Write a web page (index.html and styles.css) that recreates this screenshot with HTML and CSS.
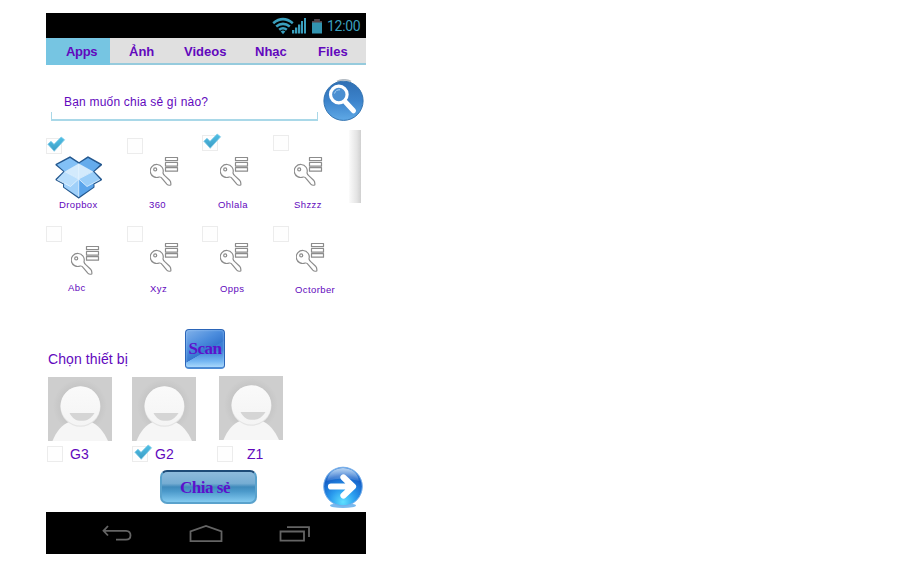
FILE: index.html
```html
<!DOCTYPE html>
<html lang="vi">
<head>
<meta charset="utf-8">
<title>Chia sẻ</title>
<link rel="stylesheet" href="styles.css">
</head>
<body>
<svg class="defs" width="0" height="0" aria-hidden="true">
  <defs>
    <linearGradient id="tick" x1="0" y1="0" x2="0" y2="1"><stop offset="0" stop-color="#4fc0e6"/><stop offset="1" stop-color="#3d9cc4"/></linearGradient>
    <linearGradient id="blue" x1="0" y1="0" x2="0" y2="1"><stop offset="0" stop-color="#2f6fb4"/><stop offset=".5" stop-color="#3c83cb"/><stop offset="1" stop-color="#5fa9e6"/></linearGradient>
    <radialGradient id="orb" cx=".5" cy=".9" r=".85"><stop offset="0" stop-color="#5fe0ff"/><stop offset=".4" stop-color="#2a9bee"/><stop offset=".8" stop-color="#1560c8"/><stop offset="1" stop-color="#4a8fdc"/></radialGradient>
    <linearGradient id="gloss" x1="0" y1="0" x2="0" y2="1"><stop offset="0" stop-color="#fff" stop-opacity=".6"/><stop offset="1" stop-color="#fff" stop-opacity=".1"/></linearGradient>
    <linearGradient id="head" x1="0" y1="0" x2="0" y2="1"><stop offset="0" stop-color="#fafafa"/><stop offset="1" stop-color="#f4f4f4"/></linearGradient>
    <radialGradient id="back"><stop offset=".6" stop-color="#c2c2c2"/><stop offset="1" stop-color="#cecece"/></radialGradient>
  </defs>
  <symbol id="check" viewBox="0 0 20 18"><path d="M1.800 9.200 L5 6.200 L8 9.300 L15.200 2 L18.600 4.800 L8.200 16.300 Z" fill="url(#tick)" stroke="#7fcbe9" stroke-width=".8" stroke-linejoin="round"/></symbol>
  <symbol id="key" viewBox="0 0 29 31">
    <g fill="none" stroke="#8c8c8c" stroke-width="1.200" stroke-linejoin="round">
      <path d="M9.200 21 A6.500 6.500 0 1 1 13 16.800 C13.200 18.300 14 19 15 19.900 L19.600 24.200 Q21.200 26 20.800 29 Q18.400 29.800 16.800 28.200 L12.200 22.600 Q11.200 20.800 9.200 21 Z"/>
      <circle cx="5.200" cy="13.400" r="1.500"/>
      <path d="M15.500 1.500H27.500V4.700H15.500Z M15.500 6.500H27.500V10.200H15.500Z M15.500 11.600H27.500V15.200H15.500Z"/>
    </g>
  </symbol>
  <symbol id="person" viewBox="0 0 64 64">
    <rect width="64" height="64" fill="#cecece"/>
    <circle cx="32" cy="29" r="27" fill="url(#back)"/>
    <path d="M4.500 64 C8 55 14 47.500 21 45 H43 C50 47.500 56 55 60 64 Z" fill="#f6f6f6"/>
    <circle cx="32.400" cy="29.600" r="20.100" fill="#e4e4e4"/>
    <circle cx="32.400" cy="28.900" r="19.700" fill="url(#head)"/>
    <path d="M21.500 35.900 H46.500 C43 41.500 39 43.800 33.500 43.800 C28 43.800 24.500 41.500 21.500 35.900 Z" fill="#d5d5d5"/>
  </symbol>
</svg>

<main class="phone">
  <header class="status">
    <svg class="status-icons" width="51" height="18" viewBox="0 0 51 18">
      <g fill="none" stroke="#3a9fbd" stroke-width="2.600"><path d="M1.200 6.200 Q11 -2 20.800 6.200"/><path d="M4.200 9.600 Q11 4 17.800 9.600"/><path d="M7.200 12.800 Q11 9.700 14.800 12.800"/></g>
      <path d="M8.700 14.500 Q11 12.700 13.300 14.500 L11 17.200Z" fill="#3a9fbd"/>
      <path d="M20 13h2.300v3.500H20zM23 10.500h2.300v6H23zM26 7.500h2.300v9H26zM29 4h2v12.500h-2zM32 1h2v15.500h-2z" fill="#3a9fbd"/>
      <path d="M40 4h2.500V2h5v2H50v12.500H40z" fill="#3293af"/><path d="M40 4h2.500V2h5v2H50v1.500H40z" fill="#554348"/>
    </svg>
    <span class="clock">12:00</span>
  </header>

  <nav class="tabs">
    <a class="tab tab-active">Apps</a><a class="tab tab-photo">Ảnh</a><a class="tab tab-video">Videos</a><a class="tab tab-music">Nhạc</a><a class="tab">Files</a>
  </nav>

  <section class="search">
    <div class="field">Bạn muốn chia sẻ gì nào?</div>
    <svg width="42" height="44" viewBox="0 0 42 44">
      <path d="M14 2.500 Q21 -1 28 2.500" fill="none" stroke="#b5bdc5" stroke-width="1.600"/>
      <circle cx="20.500" cy="21.800" r="19.600" fill="url(#blue)" stroke="#3474b1"/>
      <path d="M21 21.500 L30.500 31.800" stroke="#fff" stroke-width="5" stroke-linecap="round"/>
      <circle cx="15.800" cy="15.500" r="8.300" fill="#4b8fd1" stroke="#fff" stroke-width="3.200"/>
      <path d="M11.500 14.500 Q12.800 10.500 17 10.800" stroke="#a7d0f3" fill="none"/>
    </svg>
  </section>

  <section class="apps">
    <div class="grid">
      <div class="app dropbox">
        <span class="box"><svg class="mark" width="20" height="18"><use href="#check"/></svg></span>
        <svg class="icon" width="47" height="43" viewBox="0 0 47 43">
          <g stroke-linejoin="round">
            <path d="M15 1.300 L24 7.300 L33 1.300 L46 8.700 L38 15.500 L46 23.500 L38.500 27.500 V31 L23.700 41.500 L9 31 V27.500 L1.500 23.500 L9.700 15.500 L1.500 8.700 Z" fill="#7dbdf5" stroke="#24588f" stroke-width="2"/>
            <path d="M15 2 L23.500 7.500 L9.700 15.500 L2 8.700Z" fill="#82c0f6"/>
            <path d="M33 2 L24 7.500 L38 15.500 L45 8.700Z" fill="#64abec"/>
            <path d="M9.700 15.500 L23.700 7.500 L38 15.500 L23.700 23Z" fill="#d3eafc"/>
            <path d="M9.700 15.500 L23.700 23 V41 L9 31Z" fill="#9fd0fa"/>
            <path d="M38 15.500 L23.700 23 V41 L38.500 31Z" fill="#5ba5eb"/>
            <path d="M9.700 15.500 L23.700 23 L15.500 30.500 L2 23.500Z" fill="#b9defc"/>
            <path d="M38 15.500 L23.700 23 L32 30.500 L45.300 23.500Z" fill="#9aceF9"/>
            <path d="M2 23.500 L15.500 30.500 L23.700 23 L32 30.500 L45 23.500 M23.700 7.500V41 M9.700 15.500 L23.700 23 L38 15.500" fill="none" stroke="#e5f3fe" stroke-width=".8"/>
          </g>
        </svg>
        <span class="name">Dropbox</span>
      </div>
      <div class="app a360"><span class="box"></span><svg class="icon" width="29" height="31"><use href="#key"/></svg><span class="name">360</span></div>
      <div class="app ohlala"><span class="box"><svg class="mark" width="20" height="18"><use href="#check"/></svg></span><svg class="icon" width="29" height="31"><use href="#key"/></svg><span class="name">Ohlala</span></div>
      <div class="app shzzz"><span class="box"></span><svg class="icon" width="29" height="31"><use href="#key"/></svg><span class="name">Shzzz</span></div>
      <div class="app abc"><span class="box"></span><svg class="icon" width="29" height="31"><use href="#key"/></svg><span class="name">Abc</span></div>
      <div class="app xyz"><span class="box"></span><svg class="icon" width="29" height="31"><use href="#key"/></svg><span class="name">Xyz</span></div>
      <div class="app opps"><span class="box"></span><svg class="icon" width="29" height="31"><use href="#key"/></svg><span class="name">Opps</span></div>
      <div class="app octorber"><span class="box"></span><svg class="icon" width="29" height="31"><use href="#key"/></svg><span class="name">Octorber</span></div>
    </div>
    <div class="scrollbar"></div>
  </section>

  <section class="choose">
    <h2>Chọn thiết bị</h2>
    <button class="scan">Scan</button>
  </section>

  <section class="devices">
    <div class="device g3"><svg width="64" height="64"><use href="#person"/></svg><label><span class="box"></span><span>G3</span></label></div>
    <div class="device g2"><svg width="64" height="64"><use href="#person"/></svg><label><span class="box"><svg class="mark" width="20" height="18"><use href="#check"/></svg></span><span>G2</span></label></div>
    <div class="device z1"><svg width="64" height="64"><use href="#person"/></svg><label><span class="box"></span><span>Z1</span></label></div>
  </section>

  <section class="actions">
    <button class="share">Chia sẻ</button>
    <svg class="next" width="40" height="44" viewBox="0 0 40 44">
      <ellipse cx="20" cy="39.500" rx="13" ry="2.500" fill="#79b9ee"/>
      <circle cx="20" cy="20.500" r="19.300" fill="url(#orb)" stroke="#76aeea"/>
      <path d="M4 15 Q6 3 20 2 Q34 3 36 15 Q20 10 4 15Z" fill="url(#gloss)"/>
      <path d="M8 20.500 H29 M20.500 11.500 L30 20.500 L20.500 29.500" fill="none" stroke="#fff" stroke-width="6.200" stroke-linecap="round" stroke-linejoin="round"/>
    </svg>
  </section>

  <footer class="navbar">
    <svg width="30" height="18" viewBox="0 0 30 18"><path d="M6 1 L1.500 5.800 L6 10.500 M1.500 5.800 H24 Q28.500 6 28.500 10.300 Q28.500 14.700 24 14.700 H14" /></svg>
    <svg width="34" height="18" viewBox="0 0 34 18"><path d="M1.500 16.200 V6.500 L17 1 L32.500 6.500 V16.200Z"/></svg>
    <svg width="32" height="18" viewBox="0 0 32 18"><path d="M1.500 6.500 H25 V15.700 H1.500Z M8 2.200 H30 V12"/></svg>
  </footer>
</main>
</body>
</html>
```
FILE: styles.css
```css
* { box-sizing: border-box; }
body {
  margin: 0;
  padding: 13px 0 0 46px;
  background: #fff;
  color: #6208bd;
  font-family: "Liberation Sans", Arial, sans-serif;
}
svg { display: block; flex: none; }
button { padding: 0; font: bold 17px "Liberation Serif", serif; color: #5c12cc; }
.defs { position: absolute; }
.phone { width: 320px; height: 541px; display: flex; flex-direction: column; }
.phone > * { flex: none; }

.status {
  height: 25px;
  background: #000;
  display: flex;
  align-items: center;
  justify-content: flex-end;
  padding: 1px 6px 0 0;
  gap: 4px;
}
.clock { color: #3a9fbd; font: 14px/20px Roboto, sans-serif; width: 33px; letter-spacing: -0.3px; }

.tabs { height: 27px; display: flex; background: #e0e0e0; border-bottom: 2px solid #96cbdd; }
.tab { flex: none; padding-left: 19px; font-size: 13px; font-weight: bold; line-height: 27px; }
.tab-active { width: 64px; height: 27px; padding-left: 20px; background: #76c5e2; letter-spacing: -.3px; }
.tab-photo { width: 55px; }
.tab-video { width: 71px; }
.tab-music { width: 63px; }

.search { height: 65px; display: flex; padding: 14px 1px 0 5px; gap: 5px; }
.field {
  width: 267px;
  height: 42px;
  padding: 15px 0 0 12px;
  font-size: 12px;
  line-height: 16px;
  letter-spacing: .2px;
  border: solid;
  border-width: 0 1px 2px;
  border-image: linear-gradient(to top, #a9d8e8 8px, transparent 8px) 1;
}

.apps { height: 187px; display: flex; }
.grid { width: 303px; display: grid; grid-template-columns: 81px 75px 71px 76px; grid-template-rows: 88px 99px; }
.app { display: flex; flex-direction: column; align-items: flex-start; padding-top: 8px; }
.box { position: relative; display: block; flex: none; width: 16px; height: 16px; border: 1px solid #ececec; background: #fefefe; }
.mark { position: absolute; left: 0; top: -4px; }
.icon { margin: 2px 0 0 23px; }
.name {
  font-size: 9.5px;
  line-height: 12px;
  letter-spacing: .4px;
  margin: 12px 0 0 22px;
  white-space: nowrap;
}
.dropbox .icon { margin: 2px 0 0 9px; }
.dropbox .name { margin: 0 0 0 13px; }
.ohlala, .shzzz { padding-top: 5px; }
.ohlala .icon { margin: 5px 0 0 18px; }
.ohlala .name { margin-left: 16px; }
.shzzz .icon { margin: 5px 0 0 21px; }
.shzzz .name { margin-left: 21px; }
.abc .icon { margin: 3px 0 0 25px; }
.abc .name { margin: 6px 0 0 22px; }
.xyz .icon, .opps .icon, .octorber .icon { margin-top: 0; }
.xyz .name { margin: 10px 0 0 23px; }
.opps .icon { margin-left: 18px; }
.opps .name { margin: 10px 0 0 18px; }
.octorber .icon { margin-left: 23px; }
.octorber .name { margin: 11px 0 0 22px; }
.dropbox .mark, .ohlala .mark { left: -1px; }
.scrollbar { width: 12px; height: 73px; background: linear-gradient(to right, #fbfbfb, #e4e4e4 65%, #d0d0d0); }

.choose { height: 59px; display: flex; padding: 12px 0 0 2px; }
h2 { margin: 21px 0 0; width: 137px; font-size: 14px; line-height: 18px; font-weight: normal; letter-spacing: .1px; }
.scan {
  width: 40px;
  height: 40px;
  border: 1px solid #2b65b8;
  border-bottom: 2px solid #4c8bd4;
  border-radius: 4px;
  letter-spacing: -.5px;
  background: linear-gradient(150deg, #82b2ea 0%, #4c8ddd 35%, #3577cf 55%, transparent 56%), linear-gradient(#3b7fd5 55%, #77b8f3 85%, #a7d8fb);
  box-shadow: inset 0 0 2px #a8d2fa;
}

.devices { height: 92px; display: flex; }
.device { width: 84px; padding: 1px 0 0 2px; }
.device label { display: flex; align-items: center; height: 18px; margin: 4px 0 0 -1px; gap: 7px; font-size: 14px; }
.g2 { width: 87px; }
.g2 label { margin-left: 0; gap: 7px; }
.z1 { padding-top: 0; }
.z1 label { margin: 5px 0 0 -2px; gap: 14px; }

.actions { height: 44px; display: flex; padding-left: 114px; align-items: flex-start; }
.share {
  width: 97px;
  height: 34px;
  margin-top: 2px;
  padding: 1px 7px 0 0;
  border: 2px solid #5aa2cc;
  border-top-color: #1d4b78;
  border-radius: 7px;
  letter-spacing: -.45px;
  background: linear-gradient(#8dbbdc 0, #76add3 38%, #3f8abb 50%, #4c9acb 65%, #84caf0 100%);
}
.next { margin: -2px 0 0 66px; }

.navbar { height: 43px; background: #000; display: flex; justify-content: space-between; align-items: center; padding: 1px 55px 0 56px; }
.navbar path { fill: none; stroke: #646464; stroke-width: 1.8; }
```
